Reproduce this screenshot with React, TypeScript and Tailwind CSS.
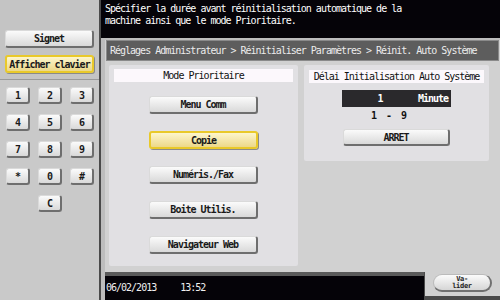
const mono = "font-['DejaVu_Sans_Mono',monospace]";

function Btn({
  children,
  className = "",
  yellow = false,
}: {
  children: React.ReactNode;
  className?: string;
  yellow?: boolean;
}) {
  const skin = yellow
    ? "bg-gradient-to-b from-[#fdf6cc] to-[#ecd889] border-2 border-[#e9c92a] shadow-[1px_1px_0_#8a8a8a]"
    : "bg-gradient-to-b from-[#fbfbfb] to-[#d9d9d9] border border-[#dadada] border-r-2 border-b-2 border-r-[#6e6e6e] border-b-[#6e6e6e]";
  return (
    <div
      className={`flex items-center justify-center rounded-[3px] text-[10px] font-bold tracking-[-1px] text-[#1a1a1a] ${skin} ${className}`}
    >
      {children}
    </div>
  );
}

const keys = ["1", "2", "3", "4", "5", "6", "7", "8", "9", "*", "0", "#"];
const modes = ["Menu Comm", "Copie", "Numéris./Fax", "Boite Utilis.", "Navigateur Web"];

export default function App() {
  return (
    <div className={`w-[500px] h-[300px] flex bg-[#050308] overflow-hidden ${mono}`}>
      {/* left column */}
      <div className="w-[101px] h-full shrink-0 bg-[#c9c9c9] border-r-2 border-[#4a4a4a] flex flex-col">
        <div className="h-[80px] shrink-0 pt-[30px] px-[5px] flex flex-col gap-[7px] border-b border-[#9a9a9a] bg-[#c4c4c4]">
          <Btn className="h-[18px]">Signet</Btn>
          <Btn yellow className="h-[18px]">
            Afficher clavier
          </Btn>
        </div>
        <div className="pt-[7px] pl-[6px] pr-[5px] grid grid-cols-3 gap-x-[8px] gap-y-[10px]">
          {keys.map((k) => (
            <Btn key={k} className="h-[17px]">
              {k}
            </Btn>
          ))}
          <div />
          <Btn className="h-[17px]">C</Btn>
        </div>
      </div>

      {/* right column */}
      <div className="flex-1 flex flex-col">
        <div className="h-[38px] shrink-0 pl-[4px] pt-[3px] text-[10px] leading-[12px] tracking-[-1px] text-white">
          <p>Spécifier la durée avant réinitialisation automatique de la</p>
          <p>machine ainsi que le mode Prioritaire.</p>
        </div>

        <div className="flex-1 flex flex-col border-l-[4px] border-t-2 border-[#bdbdbd] bg-[#d1d1d1]">
          <div className="h-[21px] shrink-0 mx-[1px] bg-[#5d5d5d] border border-[#8a8a8a] flex items-center pl-[3px] text-[10px] tracking-[-1px] text-[#ececec]">
            Réglages Administrateur &gt; Réinitialiser Paramètres &gt; Réinit. Auto Système
          </div>

          <div className="flex-1 flex gap-[6px] pl-[4px] pt-[4px] pr-[10px] items-start">
            <div className="w-[189px] h-[201px] bg-[#e1e0e3] rounded-[2px] pt-[4px] px-[5px] flex flex-col items-center">
              <div className="w-full h-[13px] bg-[#fcf8fc] flex items-center justify-center text-[10px] tracking-[-1px] text-[#111]">
                Mode Prioritaire
              </div>
              <div className="mt-[14px] flex flex-col gap-[17px]">
                {modes.map((m) => (
                  <Btn key={m} yellow={m === "Copie"} className="w-[109px] h-[18px]">
                    {m}
                  </Btn>
                ))}
              </div>
            </div>

            <div className="w-[185px] h-[96px] bg-[#e1e0e3] rounded-[2px] pt-[5px] px-[5px] flex flex-col items-center">
              <div className="w-full h-[13px] bg-[#fcf8fc] flex items-center justify-center text-[10px] tracking-[-1px] text-[#111]">
                Délai Initialisation Auto Système
              </div>
              <div className="mt-[7px] w-[109px] h-[17px] bg-[#2a292c] flex items-center text-[10px] font-bold tracking-[-1px] text-white">
                <span className="w-[76px] text-center">1</span>
                <span>Minute</span>
              </div>
              <div className="mt-[2px] whitespace-pre text-[10px] font-bold tracking-[-1px] text-[#111] leading-[14px] pr-[16px]">
                {"1  -  9"}
              </div>
              <Btn className="mt-[6px] w-[107px] h-[17px]">ARRET</Btn>
            </div>
          </div>

          <div className="h-[28px] shrink-0 flex">
            <div className="w-[319px] bg-[#050308] border-t-4 border-[#5a5a5a] flex items-center pl-[1px] pb-[2px] text-[10px] tracking-[-1px] text-[#f0f0f0]">
              <span>06/02/2013</span>
              <span className="ml-[24px]">13:52</span>
            </div>
            <div className="flex-1 bg-[#d1d1d1] border-l border-b-4 border-[#4a4a4a] flex items-start justify-center pt-[2px]">
              <div className="w-[59px] h-[18px] rounded-full bg-gradient-to-b from-[#fbfbfb] to-[#d6d6d6] border border-[#bbb] border-r-2 border-b-2 border-r-[#707070] border-b-[#707070] flex flex-col items-center justify-center text-[7px] leading-[7px] font-bold tracking-[-0.3px] text-[#222]">
                <span>Va-</span>
                <span>lider</span>
              </div>
            </div>
          </div>
        </div>
      </div>
    </div>
  );
}
